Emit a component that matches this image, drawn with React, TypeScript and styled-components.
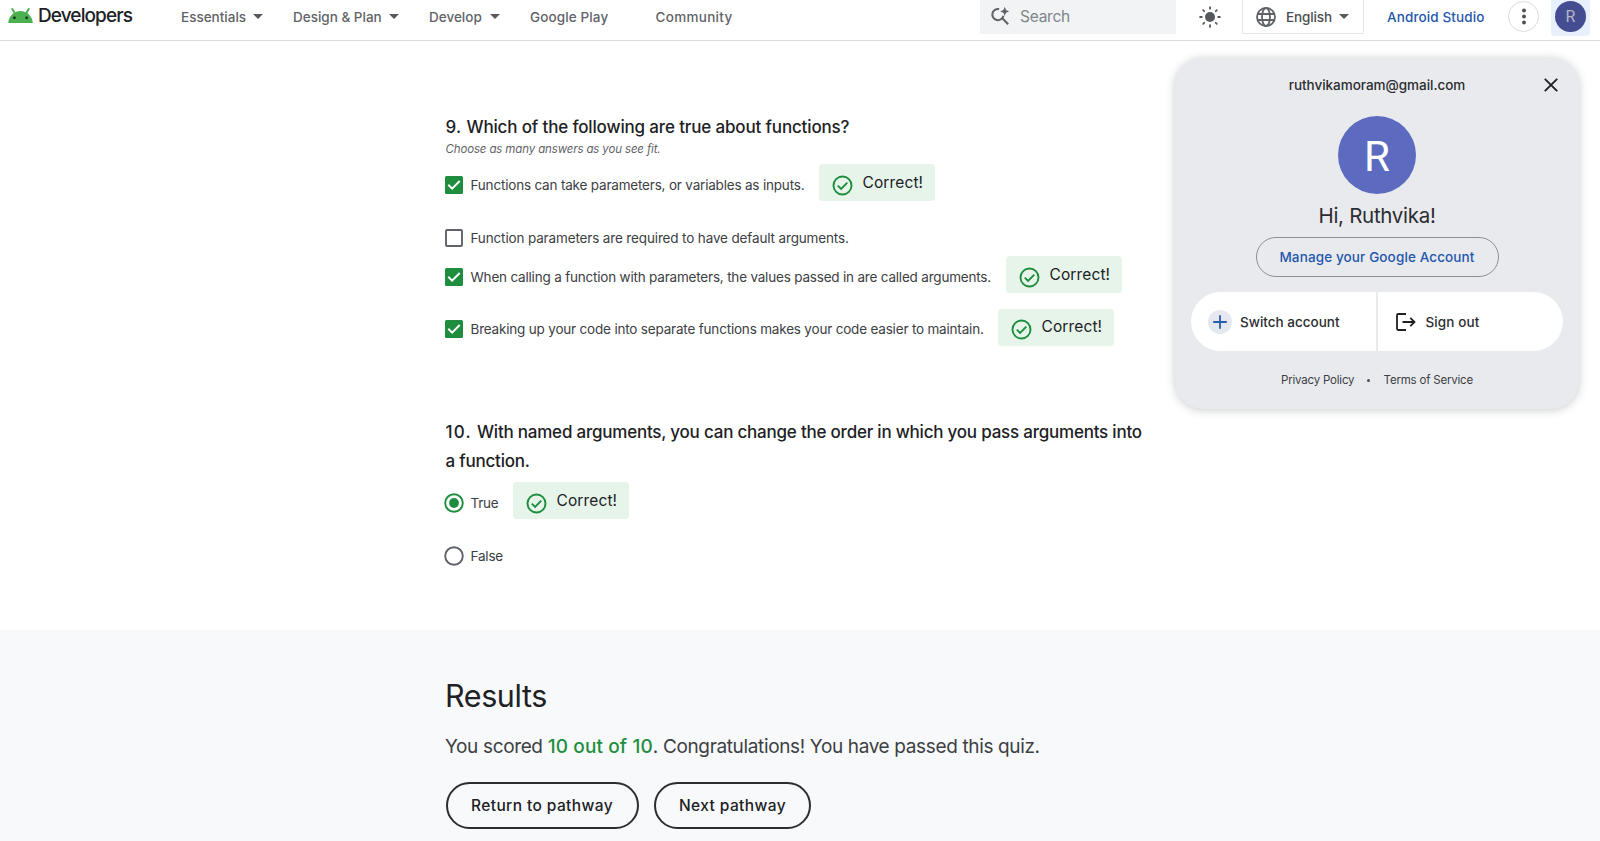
import React from "react";
import styled, { createGlobalStyle, css } from "styled-components";

const GlobalStyle = createGlobalStyle`
  * { box-sizing: border-box; }
  html, body { margin: 0; padding: 0; overflow: hidden; }
  body {
    background: #fff;
    color: #202124;
    font-family: Inter, Roboto, "Liberation Sans", sans-serif;
    white-space: nowrap;
  }
  button, input { font-family: inherit; }
  svg { display: block; flex: none; }
`;

const tracking = css<{ $track?: number }>`
  letter-spacing: ${(p) => p.$track ?? 0}px;
`;

const Page = styled.div`
  width: 1600px;
  height: 841px;
  overflow: hidden;
  display: flex;
  flex-direction: column;
`;

/* ---------- Top bar ---------- */

const TopBar = styled.header`
  height: 41px;
  flex: none;
  display: flex;
  align-items: flex-start;
  border-bottom: 1px solid #dadce0;
`;

const Brand = styled.a`
  width: 181px;
  height: 30px;
  padding-left: 8px;
  display: flex;
  align-items: center;
  gap: 5px;
`;

const BrandName = styled.span`
  ${tracking}
  font-size: 19px;
  line-height: 24px;
  font-weight: 500;
  padding-top: 2px;
`;

const Nav = styled.nav`
  height: 34px;
  display: flex;
  width: 799px;
`;

const NavItem = styled.a<{ $width: number; $track?: number }>`
  ${tracking}
  width: ${(p) => p.$width}px;
  flex: none;
  height: 33px;
  display: flex;
  align-items: center;
  font-size: 13.5px;
  font-weight: 500;
  color: #5f6368;
`;

const NavLabel = styled.span<{ $width: number }>`
  width: ${(p) => p.$width}px;
`;

const SearchBox = styled.div`
  width: 196px;
  height: 34px;
  background: #f1f3f4;
  padding: 0 0 2px 10px;
  display: flex;
  align-items: center;
  gap: 10px;
`;

const SearchLabel = styled.span`
  ${tracking}
  font-size: 15.5px;
  color: #80868b;
`;

const ThemeToggle = styled.div`
  width: 66px;
  height: 33px;
  padding-left: 1px;
  display: flex;
  align-items: center;
  justify-content: center;
`;

const LanguageMenu = styled.div`
  width: 122px;
  height: 34px;
  padding-left: 12px;
  border: 1px solid #e3e5e8;
  border-top: 0;
  border-radius: 0 0 2px 2px;
  display: flex;
  align-items: center;
  color: #4a4d51;
  font-size: 13.5px;
  font-weight: 500;
`;

const LanguageName = styled.span`
  ${tracking}
  width: 53px;
  margin-left: 9px;
`;

const StudioLink = styled.a`
  ${tracking}
  width: 121px;
  margin-left: 23px;
  line-height: 34px;
  font-size: 13.5px;
  font-weight: 500;
  color: #1f57ac;
`;

const MoreButton = styled.div`
  width: 31px;
  height: 31px;
  margin-top: 1px;
  border: 1px solid #dadce0;
  border-radius: 50%;
  display: flex;
  align-items: center;
  justify-content: center;
`;

const AccountSlot = styled.div`
  width: 39px;
  height: 36px;
  margin-left: 12px;
  background: #e8f0fe;
  border-radius: 0 0 4px 4px;
  padding: 1px 4px;
`;

const SmallAvatar = styled.div`
  width: 31px;
  height: 31px;
  border-radius: 50%;
  background: #444d92;
  color: #b4b6c6;
  font: 400 16px/32px Roboto, sans-serif;
  text-align: center;
`;

/* ---------- Quiz ---------- */

const Quiz = styled.main`
  height: 589px;
  flex: none;
  padding: 72px 0 0 445.5px;
`;

const Question = styled.h3`
  ${tracking}
  margin: 0;
  font-size: 17px;
  line-height: 29px;
  font-weight: 500;
`;

const QuestionNumber = styled.span<{ $width: number; $track?: number }>`
  ${tracking}
  display: inline-block;
  width: ${(p) => p.$width}px;
`;

const Hint = styled.p`
  ${tracking}
  margin: -1px 0 0;
  font-size: 11.5px;
  line-height: 16px;
  font-style: italic;
  color: #5f6368;
`;

const Option = styled.label<{ $height: number }>`
  display: flex;
  align-items: center;
  height: ${(p) => p.$height}px;
`;

const Options = styled.div<{ $top: number }>`
  margin-top: ${(p) => p.$top}px;
  display: flex;
  flex-direction: column;
`;

const OptionControl = styled.span`
  width: 26.5px;
  margin-left: -1.5px;
  flex: none;
`;

const OptionText = styled.span<{ $width: number; $track?: number }>`
  ${tracking}
  width: ${(p) => p.$width}px;
  font-size: 13.5px;
  line-height: 20px;
  color: #3c4043;
`;

const CorrectBadge = styled.span`
  width: 116px;
  height: 37px;
  margin-top: -4px;
  padding-left: 13px;
  border-radius: 4px;
  background: #e6f4ea;
  display: flex;
  align-items: center;
  gap: 10px;
  svg { margin-top: 5px; }
`;

const CorrectLabel = styled.span`
  ${tracking}
  font-size: 15.5px;
  line-height: 24px;
`;

const QuestionGap = styled.div`
  height: 49px;
`;

/* ---------- Results ---------- */

const Results = styled.section`
  flex: 1;
  background: #f8f9fb;
  padding: 46px 0 0 445px;
`;

const ResultsTitle = styled.h2`
  ${tracking}
  margin: 0;
  font-size: 30.5px;
  line-height: 40px;
  font-weight: 400;
`;

const Score = styled.p`
  ${tracking}
  margin: 16px 0 0;
  font-size: 19px;
  line-height: 29px;
  color: #3c4043;
`;

const Points = styled.strong`
  ${tracking}
  font-weight: 500;
  color: #1e8e3e;
`;

const Actions = styled.div`
  margin: 21px 0 0 0;
  padding-left: 0.5px;
  display: flex;
  gap: 15.5px;
`;

const PillButton = styled.button<{ $width: number; $track?: number }>`
  ${tracking}
  width: ${(p) => p.$width}px;
  height: 47px;
  padding: 0;
  border: 2px solid #2b2d31;
  border-radius: 24px;
  background: transparent;
  color: #202124;
  font-size: 15.5px;
  font-weight: 500;
`;

/* ---------- Account panel ---------- */

const AccountPanel = styled.aside`
  position: absolute;
  left: 1175px;
  top: 58px;
  width: 404px;
  height: 351px;
  border-radius: 28px;
  background: #e9eaee;
  box-shadow: 0 1px 10px rgba(60, 64, 67, 0.28);
  display: flex;
  flex-direction: column;
  align-items: center;
`;

const PanelHeader = styled.div`
  width: 100%;
  height: 54px;
  padding: 0 21px 0 35px;
  display: flex;
  align-items: center;
`;

const Email = styled.div`
  ${tracking}
  flex: 1;
  text-align: center;
  font-size: 13.5px;
  font-weight: 500;
  color: #2b2d30;
`;

const LargeAvatar = styled.div`
  width: 78px;
  height: 78px;
  margin-top: 4px;
  border-radius: 50%;
  background: #5c6bc0;
  color: #fff;
  font: 400 42px/81px Roboto, sans-serif;
  text-align: center;
`;

const Greeting = styled.div`
  ${tracking}
  margin-top: 6px;
  font-size: 20.5px;
  line-height: 32px;
  color: #2b2d30;
`;

const ManageButton = styled.button`
  ${tracking}
  width: 243px;
  height: 40px;
  margin-top: 5px;
  padding: 0;
  border: 1px solid #8b8f94;
  border-radius: 20px;
  background: transparent;
  color: #1f57ac;
  font-size: 13.5px;
  font-weight: 500;
`;

const AccountActions = styled.div`
  width: 372px;
  height: 59px;
  margin-top: 15px;
  display: flex;
  gap: 2px;
  border-radius: 30px;
  overflow: hidden;
`;

const AccountAction = styled.div<{ $gap: number; $left: number; $track?: number }>`
  ${tracking}
  flex: 1;
  background: #fff;
  padding-left: ${(p) => p.$left}px;
  display: flex;
  align-items: center;
  gap: ${(p) => p.$gap}px;
  font-size: 13.5px;
  font-weight: 500;
  color: #2b2d30;
`;

const LegalLinks = styled.div`
  margin-top: 19px;
  height: 20px;
  width: 192px;
  display: flex;
  align-items: center;
  justify-content: space-between;
  font-size: 11.5px;
  color: #3c4043;
`;

const LegalLink = styled.a`
  ${tracking}
`;

const Dot = styled.i`
  width: 3px;
  height: 3px;
  border-radius: 50%;
  background: #4a4d51;
`;

/* ---------- Icons ---------- */

const Caret = () => (
  <svg width="10" height="5" viewBox="0 0 10 5" fill="#55595d"><path d="M0 0h10L5 5z" /></svg>
);

const AndroidHead = () => (
  <svg width="25" height="15" viewBox="0 0 25 15">
    <path d="M4.3 1 7 5.4M20.7 1 18 5.4" stroke="#4caf50" strokeWidth="2" strokeLinecap="round" />
    <path d="M.2 15C.7 8 6 3 12.5 3S24.3 8 24.8 15z" fill="#4caf50" />
    <circle cx="6.4" cy="9.8" r="1.4" fill="#15321a" />
    <circle cx="18.6" cy="9.8" r="1.4" fill="#15321a" />
  </svg>
);

const SearchSpark = () => (
  <svg width="20" height="20" viewBox="0 0 20 20" fill="none">
    <path d="M9.2 3.1a5.6 5.6 0 1 0 4.2 6.6" stroke="#5f6368" strokeWidth="2" />
    <path d="m12 12 6.2 6.2" stroke="#5f6368" strokeWidth="2.1" />
    <path d="M14.7 .8 16 4.1 19.2 5.4 16 6.7l-1.3 3.3-1.3-3.3-3.2-1.3 3.2-1.3z" fill="#5f6368" />
  </svg>
);

const Sun = () => (
  <svg width="22" height="22" viewBox="0 0 22 22" stroke="#55595d" strokeWidth="1.8" strokeLinecap="round">
    <circle cx="11" cy="11" r="5" fill="#55595d" stroke="none" />
    <path d="M11 1.1v1.7M11 19.2v1.7M1.1 11h1.7M19.2 11h1.7M4.2 4.2l1 1M16.8 16.8l1 1M4.2 17.8l1-1M16.8 5.2l1-1" />
  </svg>
);

const Globe = () => (
  <svg width="22" height="22" viewBox="0 0 22 22" fill="none" stroke="#5f6368" strokeWidth="1.8">
    <circle cx="11" cy="11" r="9" />
    <ellipse cx="11" cy="11" rx="4" ry="9" />
    <path d="M2.6 8h16.8M2.6 14h16.8" />
  </svg>
);

const Kebab = () => (
  <svg width="4" height="17" viewBox="0 0 4 17" fill="#4f5357">
    <circle cx="2" cy="2.5" r="2" /><circle cx="2" cy="8.5" r="2" /><circle cx="2" cy="14.5" r="2" />
  </svg>
);

const Checkbox = ({ checked }: { checked?: boolean }) => (
  <svg width="20" height="20" viewBox="0 0 20 20" fill="none">
    {checked ? (
      <>
        <rect x="1" y="1" width="18" height="18" rx="1.5" fill="#1e8e3e" />
        <path d="m4.3 9.8 3.8 3.8 7.6-7.6" stroke="#fff" strokeWidth="2" />
      </>
    ) : (
      <rect x="2" y="2" width="16" height="16" rx="1" stroke="#5f6368" strokeWidth="1.9" />
    )}
  </svg>
);

const Radio = ({ checked }: { checked?: boolean }) => (
  <svg width="20" height="20" viewBox="0 0 20 20" fill="none">
    <circle cx="10" cy="10" r="8.8" stroke={checked ? "#1e8e3e" : "#5f6368"} strokeWidth="1.9" />
    {checked && <circle cx="10" cy="10" r="4.9" fill="#1e8e3e" />}
  </svg>
);

const CheckCircle = () => (
  <svg width="21" height="21" viewBox="0 0 21 21" fill="none" stroke="#1e8e3e" strokeWidth="1.9">
    <circle cx="10.5" cy="10.5" r="9" />
    <path d="m5.8 10.6 3.3 3.3 6.2-6.3" />
  </svg>
);

const Close = () => (
  <svg width="14" height="14" viewBox="0 0 14 14" stroke="#202124" strokeWidth="1.9">
    <path d="m.8.8 12.4 12.4M13.2.8.8 13.2" />
  </svg>
);

const PlusCircle = () => (
  <svg width="24" height="24" viewBox="0 0 24 24">
    <circle cx="12" cy="12" r="12" fill="#e5e9ef" />
    <path d="M12 5.2v13.6M5.2 12h13.6" stroke="#2a5db0" strokeWidth="1.8" />
  </svg>
);

const SignOut = () => (
  <svg width="20" height="18" viewBox="0 0 20 18" fill="none" stroke="#202124" strokeWidth="1.8">
    <path d="M10 1H2.2Q1 1 1 2.2v13.6Q1 17 2.2 17H10M6.5 9H18M14.3 4.8 18.5 9l-4.2 4.2" />
  </svg>
);

const Correct = () => (
  <CorrectBadge>
    <CheckCircle />
    <CorrectLabel $track={0.12}>Correct!</CorrectLabel>
  </CorrectBadge>
);

export default function App() {
  return (
    <Page>
      <GlobalStyle />
      <TopBar>
        <Brand>
          <AndroidHead />
          <BrandName $track={-0.9}>Developers</BrandName>
        </Brand>
        <Nav>
          <NavItem $width={112} $track={0}><NavLabel $width={72}>Essentials</NavLabel><Caret /></NavItem>
          <NavItem $width={136} $track={0}><NavLabel $width={96}>Design &amp; Plan</NavLabel><Caret /></NavItem>
          <NavItem $width={101} $track={0}><NavLabel $width={61}>Develop</NavLabel><Caret /></NavItem>
          <NavItem $width={125.5} $track={0.12}>Google Play</NavItem>
          <NavItem $width={100} $track={0.3}>Community</NavItem>
        </Nav>
        <SearchBox>
          <SearchSpark />
          <SearchLabel $track={-0.25}>Search</SearchLabel>
        </SearchBox>
        <ThemeToggle><Sun /></ThemeToggle>
        <LanguageMenu>
          <Globe />
          <LanguageName $track={-0.12}>English</LanguageName>
          <Caret />
        </LanguageMenu>
        <StudioLink $track={0.12}>Android Studio</StudioLink>
        <MoreButton><Kebab /></MoreButton>
        <AccountSlot><SmallAvatar>R</SmallAvatar></AccountSlot>
      </TopBar>

      <Quiz>
        <Question $track={-0.155}>
          <QuestionNumber $width={21} $track={0.3}>9.</QuestionNumber>Which of the following are true about functions?
        </Question>
        <Hint $track={-0.14}>Choose as many answers as you see fit.</Hint>
        <Options $top={1}>
          <Option $height={53}>
            <OptionControl><Checkbox checked /></OptionControl>
            <OptionText $width={348} $track={-0.19}>Functions can take parameters, or variables as inputs.</OptionText>
            <Correct />
          </Option>
          <Option $height={53}>
            <OptionControl><Checkbox /></OptionControl>
            <OptionText $width={390} $track={-0.145}>Function parameters are required to have default arguments.</OptionText>
          </Option>
          <Option $height={25}>
            <OptionControl><Checkbox checked /></OptionControl>
            <OptionText $width={535} $track={-0.197}>When calling a function with parameters, the values passed in are called arguments.</OptionText>
            <Correct />
          </Option>
          <Option $height={80}>
            <OptionControl><Checkbox checked /></OptionControl>
            <OptionText $width={527} $track={-0.19}>Breaking up your code into separate functions makes your code easier to maintain.</OptionText>
            <Correct />
          </Option>
        </Options>
        <QuestionGap />
        <Question $track={-0.22}>
          <QuestionNumber $width={31.5} $track={1.2}>10.</QuestionNumber>With named arguments, you can change the order in which you pass arguments into
          <br />a function.
        </Question>
        <Options $top={0}>
          <Option $height={53}>
            <OptionControl><Radio checked /></OptionControl>
            <OptionText $width={42} $track={-0.25}>True</OptionText>
            <Correct />
          </Option>
          <Option $height={53}>
            <OptionControl><Radio /></OptionControl>
            <OptionText $width={42} $track={-0.2}>False</OptionText>
          </Option>
        </Options>
      </Quiz>

      <Results>
        <ResultsTitle $track={-0.4}>Results</ResultsTitle>
        <Score $track={-0.36}>
          You scored <Points $track={0.14}>10 out of 10</Points>. Congratulations! You have passed this quiz.
        </Score>
        <Actions>
          <PillButton $width={193} $track={0.4}>Return to pathway</PillButton>
          <PillButton $width={157} $track={0.4}>Next pathway</PillButton>
        </Actions>
      </Results>

      <AccountPanel>
        <PanelHeader>
          <Email $track={-0.03}>ruthvikamoram@gmail.com</Email>
          <Close />
        </PanelHeader>
        <LargeAvatar>R</LargeAvatar>
        <Greeting $track={-0.3}>Hi, Ruthvika!</Greeting>
        <ManageButton $track={0.12}>Manage your Google Account</ManageButton>
        <AccountActions>
          <AccountAction $gap={8} $left={17} $track={0}><PlusCircle />Switch account</AccountAction>
          <AccountAction $gap={10} $left={18} $track={0.1}><SignOut />Sign out</AccountAction>
        </AccountActions>
        <LegalLinks>
          <LegalLink $track={-0.2}>Privacy Policy</LegalLink>
          <Dot />
          <LegalLink $track={-0.2}>Terms of Service</LegalLink>
        </LegalLinks>
      </AccountPanel>
    </Page>
  );
}
